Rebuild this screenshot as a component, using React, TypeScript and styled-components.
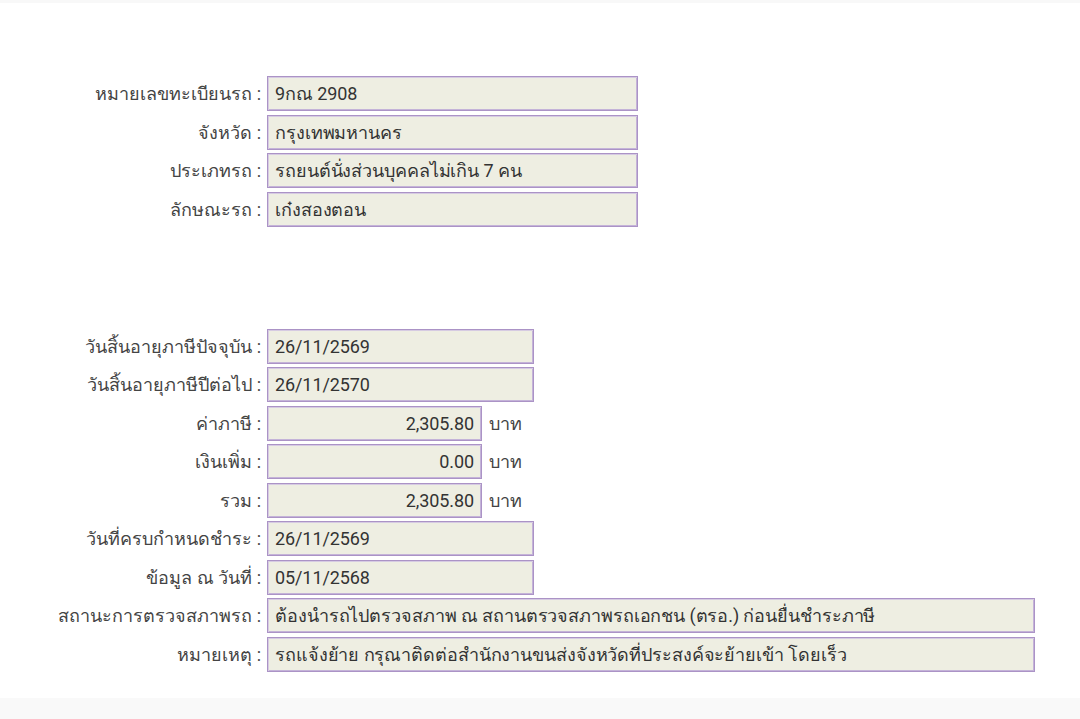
import React from 'react';
import styled, { createGlobalStyle } from 'styled-components';

const GlobalStyle = createGlobalStyle`
  html, body {
    margin: 0;
    padding: 0;
    background: #ffffff;
  }
  body {
    font-family: Roboto, "Noto Sans", "Liberation Sans", sans-serif;
    color: #333333;
  }
`;

const Page = styled.div`
  width: 1080px;
  height: 719px;
  display: flex;
  flex-direction: column;
  border-top: 3px solid #f8f8f8;
  box-sizing: border-box;
`;

const Content = styled.div`
  flex: 1;
  display: flex;
  flex-direction: column;
  gap: 102px;
  padding-top: 73px;
`;

const Footer = styled.div`
  height: 21px;
  background: #f9f9f9;
`;

const Form = styled.div`
  display: grid;
  grid-template-columns: 261px auto;
  column-gap: 6px;
  row-gap: 3.5px;
  align-items: center;
`;

const Label = styled.div`
  text-align: right;
  font-size: 18px;
  color: #444444;
  white-space: nowrap;
`;

const Field = styled.div`
  display: flex;
  align-items: center;
  gap: 7px;
`;

const Box = styled.div<{ $w: number; $right?: boolean }>`
  width: ${(p) => p.$w}px;
  height: 35px;
  box-sizing: border-box;
  background: #eeeee2;
  border: 1px solid #ab93c6;
  box-shadow: inset 1px 1px 0 #d6cbe2, inset -1px -1px 0 #c4b3d8;
  display: flex;
  align-items: center;
  justify-content: ${(p) => (p.$right ? 'flex-end' : 'flex-start')};
  padding: 0 7px;
  font-size: 18px;
  letter-spacing: -0.1px;
  color: #333333;
  white-space: nowrap;
`;

const Unit = styled.span`
  font-size: 18px;
  color: #444444;
`;

type Row = { label: string; value: string; w: number; right?: boolean; unit?: string };

const carRows: Row[] = [
  { label: 'หมายเลขทะเบียนรถ :', value: '9กณ 2908', w: 371 },
  { label: 'จังหวัด :', value: 'กรุงเทพมหานคร', w: 371 },
  { label: 'ประเภทรถ :', value: 'รถยนต์นั่งส่วนบุคคลไม่เกิน 7 คน', w: 371 },
  { label: 'ลักษณะรถ :', value: 'เก๋งสองตอน', w: 371 },
];

const taxRows: Row[] = [
  { label: 'วันสิ้นอายุภาษีปัจจุบัน :', value: '26/11/2569', w: 267 },
  { label: 'วันสิ้นอายุภาษีปีต่อไป :', value: '26/11/2570', w: 267 },
  { label: 'ค่าภาษี :', value: '2,305.80', w: 215, right: true, unit: 'บาท' },
  { label: 'เงินเพิ่ม :', value: '0.00', w: 215, right: true, unit: 'บาท' },
  { label: 'รวม :', value: '2,305.80', w: 215, right: true, unit: 'บาท' },
  { label: 'วันที่ครบกำหนดชำระ :', value: '26/11/2569', w: 267 },
  { label: 'ข้อมูล ณ วันที่ :', value: '05/11/2568', w: 267 },
  {
    label: 'สถานะการตรวจสภาพรถ :',
    value: 'ต้องนำรถไปตรวจสภาพ ณ สถานตรวจสภาพรถเอกชน (ตรอ.) ก่อนยื่นชำระภาษี',
    w: 768,
  },
  {
    label: 'หมายเหตุ :',
    value: 'รถแจ้งย้าย กรุณาติดต่อสำนักงานขนส่งจังหวัดที่ประสงค์จะย้ายเข้า โดยเร็ว',
    w: 768,
  },
];

const Rows = ({ rows }: { rows: Row[] }) => (
  <Form>
    {rows.map((r) => (
      <React.Fragment key={r.label}>
        <Label>{r.label}</Label>
        <Field>
          <Box $w={r.w} $right={r.right}>
            {r.value}
          </Box>
          {r.unit && <Unit>{r.unit}</Unit>}
        </Field>
      </React.Fragment>
    ))}
  </Form>
);

const App = () => (
  <>
    <GlobalStyle />
    <Page>
      <Content>
        <Rows rows={carRows} />
        <Rows rows={taxRows} />
      </Content>
      <Footer />
    </Page>
  </>
);

export default App;
